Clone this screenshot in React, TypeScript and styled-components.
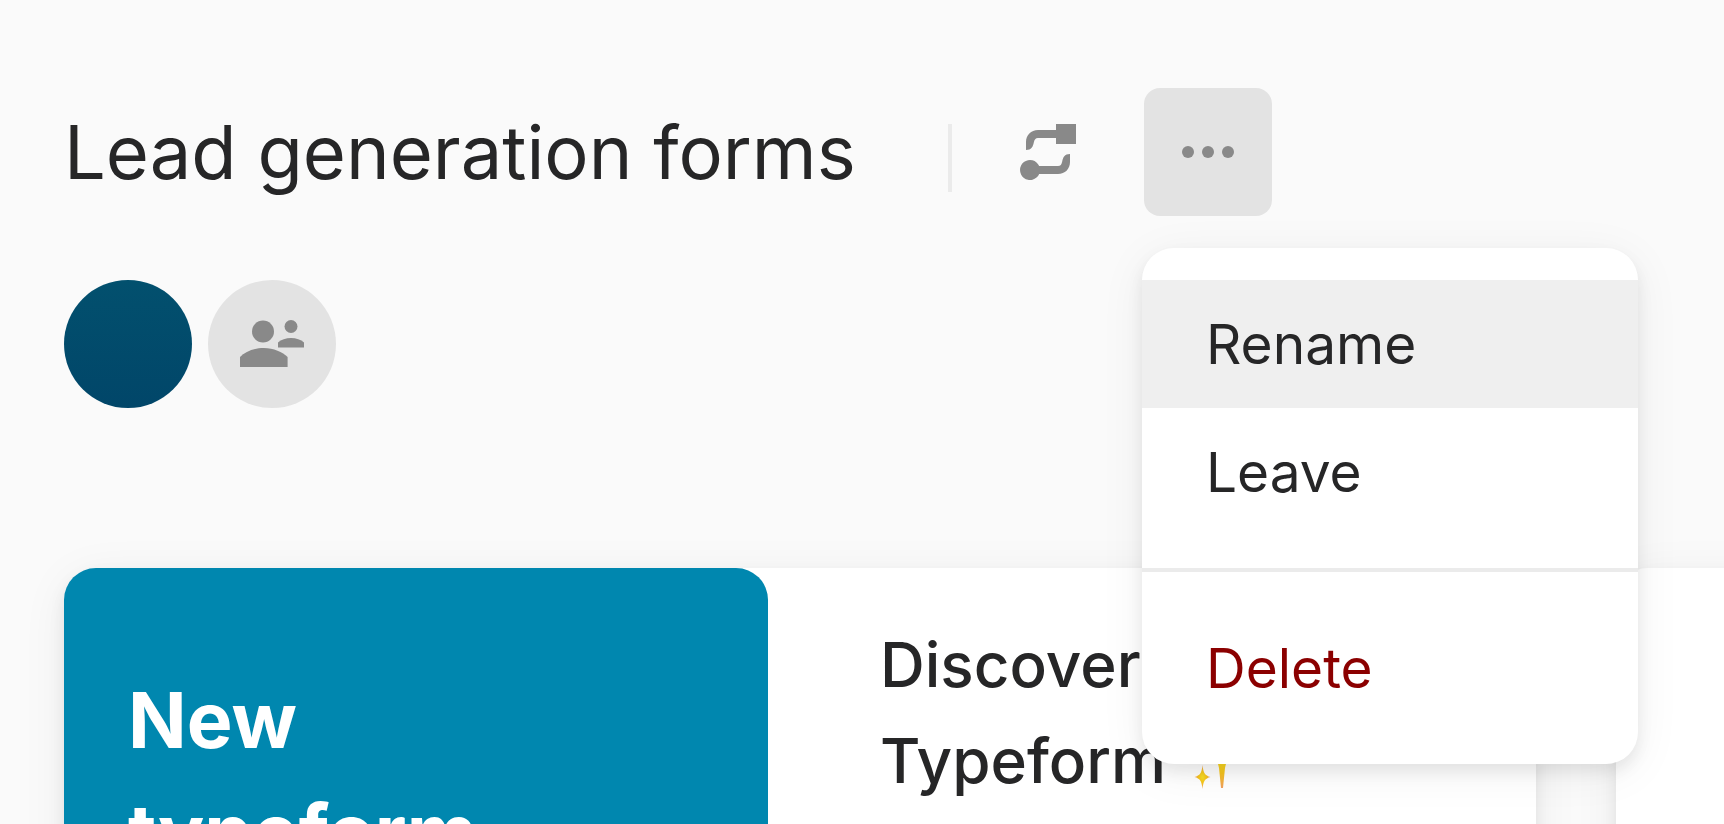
import React from 'react';
import styled, { createGlobalStyle, css } from 'styled-components';

const color = {
  page: '#fafafa',
  text: '#262627',
  surface: '#ffffff',
  subtle: '#e3e3e3',
  line: '#ebebeb',
  hover: '#efefef',
  icon: '#898989',
  accent: '#0087af',
  danger: '#8b0000',
};

const shadow = '0 8px 48px rgba(0, 0, 0, 0.06), 0 8px 16px rgba(0, 0, 0, 0.08)';

const GlobalStyle = createGlobalStyle`
  *, *::before, *::after { box-sizing: border-box; }
  body {
    margin: 0;
    background: ${color.page};
    color: ${color.text};
    font-family: Inter, "Liberation Sans", sans-serif;
  }
  button { font: inherit; color: inherit; }
  svg { display: block; }
`;

const Page = styled.main`
  height: 100vh;
  overflow: hidden;
  padding: 88px 0 0 64px;
`;

const Header = styled.header`
  display: flex;
  align-items: center;
`;

const Title = styled.h1`
  margin: 0;
  width: 884px;
  font-size: 74px;
  font-weight: 400;
  line-height: 112px;
  white-space: nowrap;
`;

const Separator = styled.span`
  width: 4px;
  height: 68px;
  margin: 12px 32px 0 0;
  background: ${color.line};
`;

const Anchor = styled.div`
  position: relative;
  margin-left: 32px;
`;

const IconButton = styled.button<{ $active?: boolean }>`
  display: flex;
  align-items: center;
  justify-content: center;
  width: 128px;
  height: 128px;
  padding: 0;
  border: 0;
  border-radius: 16px;
  background: ${({ $active }) => ($active ? color.subtle : 'transparent')};
  cursor: pointer;
`;

const Menu = styled.div`
  position: absolute;
  top: 160px;
  left: -2px;
  z-index: 2;
  width: 496px;
  border-radius: 32px;
  background: ${color.surface};
  box-shadow: ${shadow};
`;

const MenuGroup = styled.div`
  padding: 32px 0;
  & + & { border-top: 4px solid ${color.line}; }
`;

const MenuItem = styled.button<{ $active?: boolean; $danger?: boolean }>`
  display: block;
  width: 100%;
  height: 128px;
  padding: 0 64px;
  border: 0;
  background: ${({ $active }) => ($active ? color.hover : 'transparent')};
  font-size: 55px;
  line-height: 80px;
  text-align: left;
  cursor: pointer;
  ${({ $danger }) => $danger && css`color: ${color.danger};`}
`;

const Members = styled.div`
  display: flex;
  gap: 16px;
  margin-top: 64px;
`;

const round = css`
  width: 128px;
  height: 128px;
  border-radius: 50%;
`;

const Avatar = styled.div`
  ${round}
  background: linear-gradient(#02506e, #014669);
`;

const InviteButton = styled.button`
  ${round}
  display: flex;
  align-items: center;
  justify-content: center;
  padding: 0;
  border: 0;
  background: ${color.subtle};
  cursor: pointer;
`;

const Cards = styled.div`
  display: flex;
  gap: 80px;
  margin-top: 160px;
`;

const Card = styled.section`
  display: flex;
  flex: none;
  width: 1472px;
  min-height: 704px;
  border-radius: 32px;
  background: ${color.surface};
  box-shadow: ${shadow};
`;

const CreateButton = styled.button`
  display: flex;
  flex: none;
  width: 704px;
  padding: 96px 64px;
  border: 0;
  border-radius: 32px;
  background: ${color.accent};
  color: #ffffff;
  font-size: 77px;
  font-weight: 700;
  line-height: 112px;
  text-align: left;
  cursor: pointer;
`;

const PromoTitle = styled.h2`
  margin: 0;
  padding: 49px 112px;
  font-size: 62px;
  font-weight: 500;
  line-height: 96px;
`;

const PromoLine = styled.span`
  display: flex;
  align-items: center;
  gap: 28px;
`;

const SwitchIcon = () => (
  <svg width="56" height="56" viewBox="0 0 56 56" fill={color.icon} aria-hidden="true">
    <path d="M36 0h20v20H36v-6H18c-2.600 0-3.500 1.500-4.200 4.500C13 22.500 11.500 26 6 26V18C6 11 11 6 18 6h18z" />
    <path d="M50 30v8c0 7-5 12-12 12H19.200a10 10 0 1 1 0-8H38c2.600 0 3.500-1.500 4.200-4.500C43 33.500 44.500 30 50 30z" />
  </svg>
);

const DotsIcon = () => (
  <svg width="52" height="12" viewBox="0 0 52 12" fill={color.icon} aria-hidden="true">
    <circle cx="6" cy="6" r="6" />
    <circle cx="26" cy="6" r="6" />
    <circle cx="46" cy="6" r="6" />
  </svg>
);

const PeopleIcon = () => (
  <svg width="64" height="48" viewBox="0 0 64 48" fill={color.icon} aria-hidden="true">
    <circle cx="23" cy="11.500" r="11" />
    <path d="M0 47V37c5-5 14-9 23.800-9s18.800 4 23.800 9v10z" />
    <circle cx="51" cy="6.500" r="6.500" />
    <path d="M38 27.500v-5c3-3 8-4.500 13-4.500s10 1.500 13 4.500v5z" />
  </svg>
);

const SparklesIcon = () => (
  <svg width="64" height="64" viewBox="0 0 64 64" role="img" aria-label="sparkles">
    <defs>
      <radialGradient id="spark">
        <stop offset="0" stopColor="#f8e024" />
        <stop offset="0.500" stopColor="#f7c51c" />
        <stop offset="1" stopColor="#f0a060" />
      </radialGradient>
    </defs>
    <path
      fill="url(#spark)"
      d="M28 0c2 14 6 18 22 21-13 3-17 8-19 18l-2 20h-2l-2-20C23 29 19 24 6 21 22 18 26 14 28 0z"
    />
    <path
      fill="url(#spark)"
      d="M8.500 36c.8 8 2.500 10.500 8 12-5.500 1.500-7.200 4-8 12-.8-8-2.500-10.500-8-12 5.500-1.500 7.200-4 8-12z"
    />
  </svg>
);

export default function App() {
  return (
    <>
      <GlobalStyle />
      <Page>
        <Header>
          <Title>Lead generation forms</Title>
          <Separator />
          <IconButton aria-label="Switch workspace">
            <SwitchIcon />
          </IconButton>
          <Anchor>
            <IconButton $active aria-label="More options" aria-haspopup="menu" aria-expanded>
              <DotsIcon />
            </IconButton>
            <Menu role="menu">
              <MenuGroup>
                <MenuItem role="menuitem" $active>Rename</MenuItem>
                <MenuItem role="menuitem">Leave</MenuItem>
              </MenuGroup>
              <MenuGroup>
                <MenuItem role="menuitem" $danger>Delete</MenuItem>
              </MenuGroup>
            </Menu>
          </Anchor>
        </Header>
        <Members>
          <Avatar />
          <InviteButton aria-label="Invite people">
            <PeopleIcon />
          </InviteButton>
        </Members>
        <Cards>
          <Card>
            <CreateButton>
              <span>
                New
                <br />
                typeform
              </span>
            </CreateButton>
            <PromoTitle>
              <PromoLine>Discover</PromoLine>
              <PromoLine>
                Typeform
                <SparklesIcon />
              </PromoLine>
            </PromoTitle>
          </Card>
          <Card />
        </Cards>
      </Page>
    </>
  );
}
